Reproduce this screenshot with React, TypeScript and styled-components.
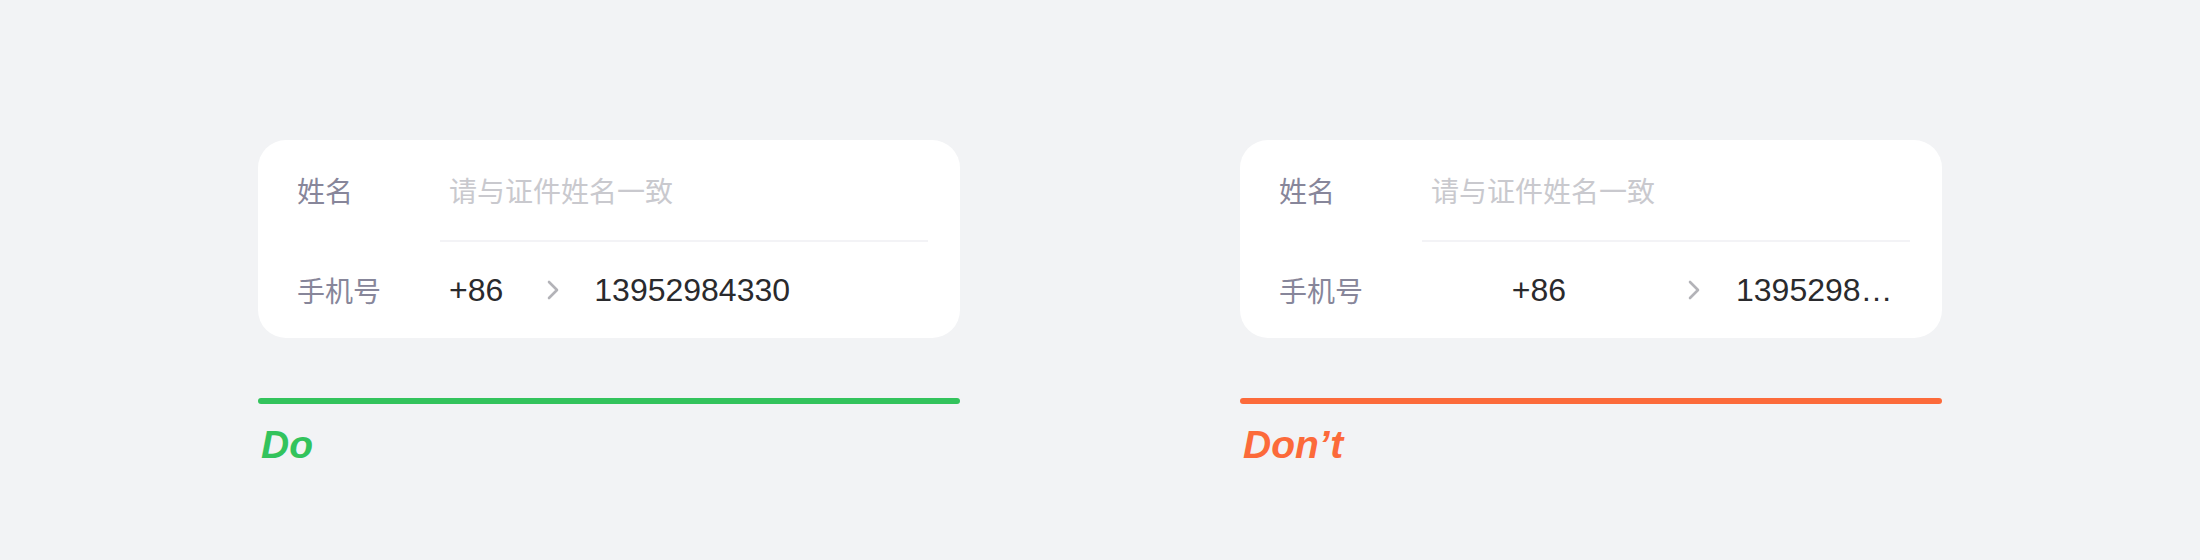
import React from "react";
import styled, { createGlobalStyle } from "styled-components";

const Global = createGlobalStyle`
  html, body { margin: 0; padding: 0; background: #f2f3f5; }
  body { font-family: "Liberation Sans", "Noto Sans CJK SC", sans-serif; }
`;

const Page = styled.div`
  width: 2200px;
  height: 560px;
  box-sizing: border-box;
  padding: 140px 0 0 258px;
  display: flex;
  gap: 280px;
  background: #f2f3f5;
`;

const Column = styled.div`
  width: 702px;
  display: flex;
  flex-direction: column;
`;

const Card = styled.div`
  background: #ffffff;
  border-radius: 28px;
  height: 198px;
  display: flex;
  flex-direction: column;
  overflow: hidden;
`;

const Row = styled.div<{ $h: number }>`
  height: ${(p) => p.$h}px;
  display: flex;
  align-items: center;
  padding-left: 39px;
  padding-right: 32px;
`;

const Label = styled.div`
  width: 152px;
  flex: none;
  font-family: "Noto Sans CJK SC", sans-serif;
  font-size: 28px;
  color: #87869a;
`;

const Placeholder = styled.div`
  font-family: "Noto Sans CJK SC", sans-serif;
  font-size: 28px;
  color: #c9c9ce;
`;

const Divider = styled.div`
  height: 2px;
  margin-left: 182px;
  margin-right: 32px;
  background: #f3f3f6;
  flex: none;
`;

const Value = styled.div`
  font-family: "Liberation Sans", Arial, sans-serif;
  font-size: 32px;
  color: #2a2a2d;
  white-space: nowrap;
`;

const AreaCode = styled(Value)<{ $w?: number; $center?: boolean }>`
  flex: none;
  width: ${(p) => (p.$w ? `${p.$w}px` : "auto")};
  text-align: ${(p) => (p.$center ? "center" : "left")};
  margin-left: ${(p) => (p.$center ? "-10px" : "0")};
`;

const Number = styled(Value)<{ $w?: number }>`
  width: ${(p) => (p.$w ? `${p.$w}px` : "auto")};
  overflow: hidden;
  text-overflow: ellipsis;
`;

const Chevron = styled.svg<{ $ml: number; $mr: number }>`
  flex: none;
  width: 12px;
  height: 20px;
  margin-left: ${(p) => p.$ml}px;
  margin-right: ${(p) => p.$mr}px;
`;

const Bar = styled.div<{ $c: string }>`
  margin-top: 60px;
  height: 6px;
  border-radius: 3px;
  background: ${(p) => p.$c};
`;

const Verdict = styled.div<{ $c: string }>`
  margin-top: 21px;
  padding-left: 3px;
  font-family: "Liberation Sans", Arial, sans-serif;
  font-weight: 700;
  font-style: italic;
  font-size: 39px;
  line-height: 1;
  color: ${(p) => p.$c};
`;

const Arrow = ({ ml, mr }: { ml: number; mr: number }) => (
  <Chevron $ml={ml} $mr={mr} viewBox="0 0 12 20">
    <path d="M2 2 L10 10 L2 18" fill="none" stroke="#b3b3b8" strokeWidth="2.6" strokeLinecap="round" strokeLinejoin="round" />
  </Chevron>
);

export default function App() {
  return (
    <>
      <Global />
      <Page>
        <Column>
          <Card>
            <Row $h={100}>
              <Label>姓名</Label>
              <Placeholder>请与证件姓名一致</Placeholder>
            </Row>
            <Divider />
            <Row $h={96}>
              <Label>手机号</Label>
              <AreaCode>+86</AreaCode>
              <Arrow ml={44} mr={35} />
              <Number>13952984330</Number>
            </Row>
          </Card>
          <Bar $c="#33c35c" />
          <Verdict $c="#33c35c">Do</Verdict>
        </Column>
        <Column>
          <Card>
            <Row $h={100}>
              <Label>姓名</Label>
              <Placeholder>请与证件姓名一致</Placeholder>
            </Row>
            <Divider />
            <Row $h={96}>
              <Label>手机号</Label>
              <AreaCode $w={236} $center>+86</AreaCode>
              <Arrow ml={31} mr={36} />
              <Number $w={165}>13952984330</Number>
            </Row>
          </Card>
          <Bar $c="#fc6a3a" />
          <Verdict $c="#fc6a3a">Don’t</Verdict>
        </Column>
      </Page>
    </>
  );
}
